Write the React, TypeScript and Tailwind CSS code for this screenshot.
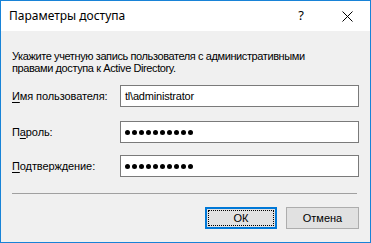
import React from "react";

const ui = { fontFamily: '"Liberation Sans", Arial, sans-serif' };
const title = { fontFamily: '"Noto Sans", "Open Sans", sans-serif' };

function Dots() {
  return (
    <div className="flex items-center gap-[2px]">
      {Array.from({ length: 10 }).map((_, i) => (
        <span key={i} className="block w-[5px] h-[5px] rounded-full bg-black" />
      ))}
    </div>
  );
}

function Row({ label, children, className = "" }: { label: React.ReactNode; children: React.ReactNode; className?: string }) {
  return (
    <div className={"flex items-center " + className}>
      <div className="w-[108px] text-[11px] leading-[13px] text-black tracking-[-0.1px]">{label}</div>
      <div className="w-[239px] h-[22px] border border-[#7a7a7a] bg-white flex items-center pl-[4px]">
        {children}
      </div>
    </div>
  );
}

export default function App() {
  return (
    <div className="w-[371px] h-[243px] border border-[#1883d7] flex flex-col bg-[#f0f0f0] overflow-hidden" style={ui}>
      <div className="h-[30px] bg-white flex items-center shrink-0">
        <div className="pl-[8px] text-[12px] text-black flex-1" style={title}>Параметры доступа</div>
        <div className="w-[46px] h-[30px] flex items-center justify-center text-[13px] text-black" style={title}>?</div>
        <div className="w-[46px] h-[30px] flex items-center justify-center">
          <svg width="11" height="11" viewBox="0 0 11 11">
            <path d="M0.5 0.5 L10.5 10.5 M10.5 0.5 L0.5 10.5" stroke="#000" strokeWidth="1" />
          </svg>
        </div>
      </div>
      <div className="flex-1 flex flex-col px-[11px]">
        <p className="mt-[19px] text-[11px] leading-[12px] text-black tracking-[-0.4px]">
          Укажите учетную запись пользователя с административными
          <br />
          правами доступа к Active Directory.
        </p>
        <Row label={<span><u className="underline-offset-[2px]">И</u>мя пользователя:</span>} className="mt-[11px]">
          <span className="text-[11px] text-black tracking-[-0.2px]">tl\administrator</span>
        </Row>
        <Row label={<span>П<u className="underline-offset-[2px]">а</u>роль:</span>} className="mt-[14px]">
          <Dots />
        </Row>
        <Row label={<span><u className="underline-offset-[2px]">П</u>одтверждение:</span>} className="mt-[12px]">
          <Dots />
        </Row>
        <div className="mt-[16px] mr-[2px] border-t border-[#a0a0a0]" />
        <div className="mt-[13px] flex justify-end gap-[9px]">
          <div className="w-[72px] h-[22px] border-2 border-[#0078d7] bg-[#e1e1e1] p-[1px]">
            <div className="w-full h-full border border-dotted border-black flex items-center justify-center text-[11px] text-black">
              ОК
            </div>
          </div>
          <div className="w-[73px] h-[22px] border border-[#adadad] bg-[#e1e1e1] flex items-center justify-center text-[11px] text-black">
            Отмена
          </div>
        </div>
      </div>
    </div>
  );
}
